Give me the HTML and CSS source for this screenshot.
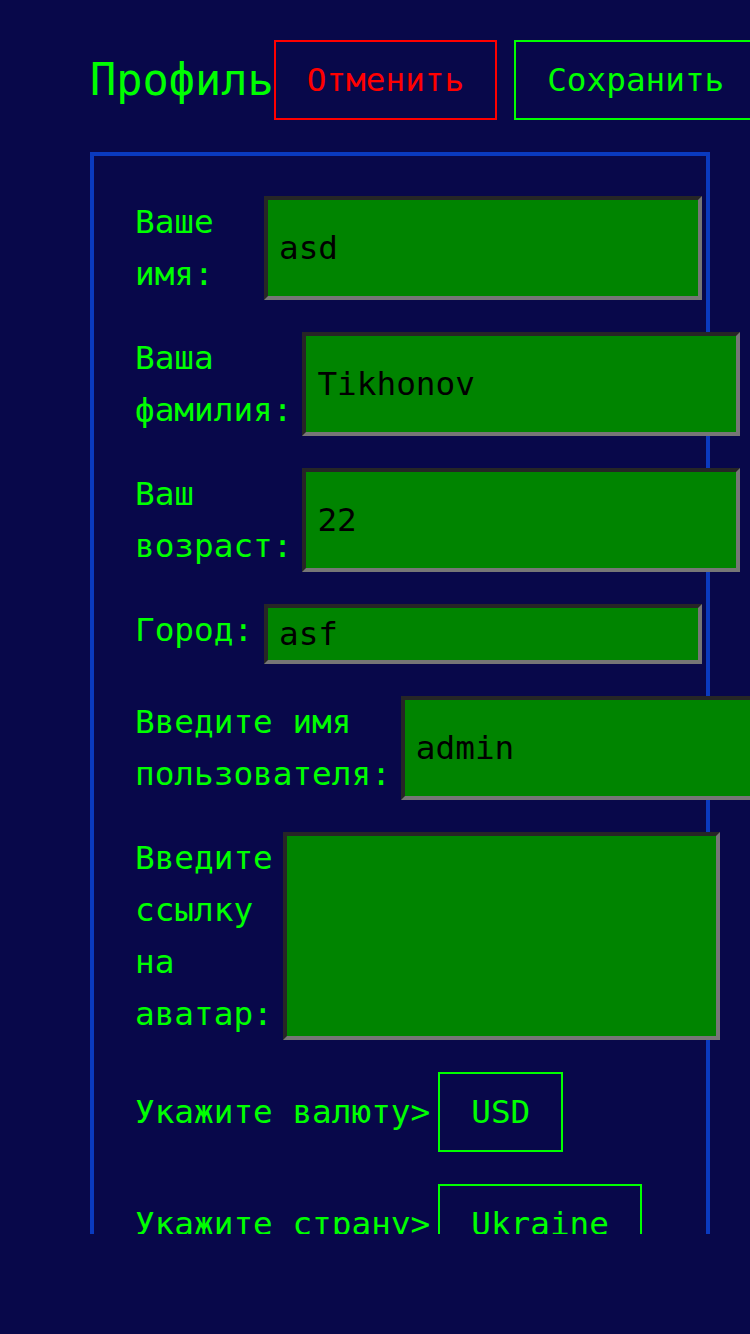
FILE: index.html
```html
<!DOCTYPE html>
<html lang="ru">
<head>
<meta charset="utf-8">
<title>Профиль</title>
<link rel="stylesheet" href="styles.css">
</head>
<body>
<div class="page">
  <header class="header">
    <h1 class="title">Профиль</h1>
    <button class="btn btn-cancel" type="button">Отменить</button>
    <button class="btn btn-save" type="button">Сохранить</button>
  </header>
  <form class="form">
    <div class="row"><label class="label">Ваше имя:</label><input class="field" value="asd"></div>
    <div class="row"><label class="label">Ваша фамилия:</label><input class="field" value="Tikhonov"></div>
    <div class="row"><label class="label">Ваш возраст:</label><input class="field" value="22"></div>
    <div class="row"><label class="label">Город:</label><input class="field" value="asf"></div>
    <div class="row"><label class="label">Введите имя пользователя:</label><input class="field" value="admin"></div>
    <div class="row"><label class="label">Введите ссылку на аватар:</label><textarea class="field area"></textarea></div>
    <div class="choice"><span class="label">Укажите валюту&gt;</span><span class="pick">USD</span></div>
    <div class="choice"><span class="label">Укажите страну&gt;</span><span class="pick">Ukraine</span></div>
  </form>
</div>
</body>
</html>
```
FILE: styles.css
```css
html, body {
  margin: 0;
  padding: 0;
  background: #08084a;
  overflow: hidden;
}

.page {
  width: 750px;
  height: 1234px;
  overflow: hidden;
  box-sizing: border-box;
  padding: 40px 0 0 90px;
  font-family: "DejaVu Sans Mono", monospace;
  font-size: 32.7px;
  color: #00ff00;
}

.header {
  display: flex;
  align-items: center;
  height: 80px;
}

.title {
  margin: 0;
  flex-shrink: 0;
  font-size: 43.6px;
  font-weight: normal;
  line-height: 1.164;
  color: #00ff00;
}

.btn {
  flex-shrink: 0;
  box-sizing: border-box;
  height: 80px;
  margin: 0;
  padding: 0 31px;
  background: transparent;
  font-family: "DejaVu Sans Mono", monospace;
  font-size: 32.7px;
  line-height: 1.164;
  border: 2px solid;
}

.btn-cancel {
  color: #ff0000;
  border-color: #ff0000;
}

.btn-save {
  margin-left: 17px;
  color: #00ff00;
  border-color: #00ff00;
}

.form {
  box-sizing: border-box;
  width: 620px;
  margin: 32px 0 0;
  padding: 40px 4px 40px 41px;
  border: 4px solid #0a3abf;
  display: flex;
  flex-direction: column;
  gap: 32px;
}

.row {
  display: flex;
  justify-content: space-between;
  align-items: stretch;
  gap: 10px;
}

.label {
  line-height: 52px;
  color: #00ff00;
}

.field {
  flex: 0 0 438px;
  width: 438px;
  box-sizing: border-box;
  min-height: 60px;
  margin: 0;
  padding: 0 11px;
  background: #008400;
  color: #000;
  font-family: "DejaVu Sans Mono", monospace;
  font-size: 32.7px;
  border-style: solid;
  border-width: 4px;
  border-color: #262626 #767676 #767676 #262626;
  outline: none;
}

.area {
  resize: none;
  flex-basis: 437px;
  width: 437px;
}

.choice {
  display: flex;
  align-items: center;
  gap: 8px;
}

.pick {
  flex-shrink: 0;
  box-sizing: border-box;
  height: 80px;
  padding: 0 31px;
  border: 2px solid #00ff00;
  display: flex;
  align-items: center;
  line-height: 1.164;
}
```
